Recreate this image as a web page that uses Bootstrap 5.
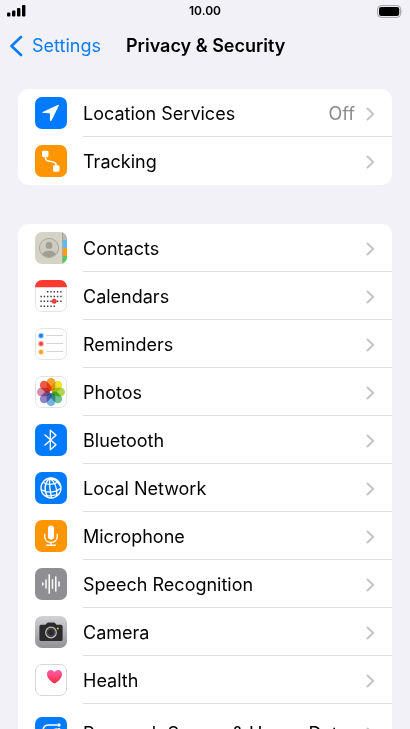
<!DOCTYPE html>
<html lang="en">
<head>
<meta charset="utf-8">
<meta name="viewport" content="width=device-width, initial-scale=1">
<title>Privacy &amp; Security</title>
<link href="https://cdn.jsdelivr.net/npm/bootstrap@5.3.0/dist/css/bootstrap.min.css" rel="stylesheet">
<style>
  body { background: #f2f1f7; color: #000; font-family: Inter, "Liberation Sans", sans-serif; font-size: 18px; line-height: 24px; }
  svg { display: block; flex: none; }
  .status-bar { height: 22px; padding: 0 7px; font-size: 12px; line-height: 22px; }
  .title-bar { height: 48px; padding: 0 8px; }
  .back-link { color: #0a7cf5; gap: 8px; width: 118px; }
  .page-title { font-size: 18px; line-height: 24px; }
  .settings-scroll { padding: 19px 18px 0; scrollbar-width: none; }
  .settings-scroll::-webkit-scrollbar { display: none; }
  .settings-group { border-radius: 11px; margin-bottom: 39px; }
  .setting { color: #000; padding-left: 17px; gap: 16px; }
  .setting-body { min-height: 48px; padding: 2px 17px 0 0; border-bottom: 1px solid #dfdfe2; gap: 11px; }
  .setting:last-child .setting-body { border-bottom: 0; }
  .setting-tall .setting-body { min-height: 58px; }
  .setting-value { color: #8a8a8e; }
  .petals { isolation: isolate; }
  .petals rect { mix-blend-mode: multiply; }
</style>
<script src="https://cdn.jsdelivr.net/npm/bootstrap@5.3.0/dist/js/bootstrap.bundle.min.js" defer></script>
</head>
<body class="vh-100 d-flex flex-column overflow-hidden">
<svg width="0" height="0" class="position-absolute" aria-hidden="true">
  <defs>
    <symbol id="chevron" viewBox="0 0 9 14"><path d="M1.5 1.5 7.2 7l-5.7 5.5" fill="none" stroke="#c4c4c7" stroke-width="2" stroke-linecap="round" stroke-linejoin="round"/></symbol>
    <linearGradient id="camera-bg" x2="0" y2="1"><stop stop-color="#d2d2d6"/><stop offset="1" stop-color="#929296"/></linearGradient>
    <linearGradient id="heart-fill" x2="0" y2="1"><stop stop-color="#ff5fae"/><stop offset="1" stop-color="#fb2b3c"/></linearGradient>
    <clipPath id="tile"><rect width="32" height="32" rx="7"/></clipPath>
  </defs>
</svg>

<div class="status-bar d-flex align-items-center flex-shrink-0">
  <div class="col">
    <svg width="19" height="12" viewBox="0 0 19 12" aria-label="Signal"><rect y="7.5" width="3.4" height="4" rx="1"/><rect x="5" y="5.5" width="3.4" height="6" rx="1"/><rect x="10" y="3" width="3.4" height="8.500" rx="1"/><rect x="15" width="3.400" height="11.500" rx="1"/></svg>
  </div>
  <div class="fw-semibold">10.00</div>
  <div class="col d-flex justify-content-end">
    <svg width="26" height="13" viewBox="0 0 26 13" aria-label="Battery"><rect x=".6" y=".6" width="23" height="11.800" rx="3.500" fill="none" stroke="#a3a3a8"/><rect x="2" y="2" width="20.200" height="9" rx="2.200"/><path d="M24.700 4.600q1.200 1.900 0 3.800z" fill="#a3a3a8"/></svg>
  </div>
</div>

<header class="title-bar d-flex align-items-center flex-shrink-0">
  <a href="#" class="back-link d-flex align-items-center text-decoration-none">
    <svg width="16" height="22" viewBox="0 0 16 22" aria-hidden="true"><path d="M13 2 3.500 11 13 20" fill="none" stroke="#0a7cf5" stroke-width="2.600" stroke-linecap="round" stroke-linejoin="round"/></svg>
    Settings
  </a>
  <h1 class="page-title fw-semibold mb-0">Privacy &amp; Security</h1>
</header>

<main class="settings-scroll flex-grow-1 overflow-auto">
  <nav class="settings-group bg-white overflow-hidden" aria-label="Tracking settings">
    <a href="#" class="setting d-flex align-items-center text-decoration-none">
      <svg width="32" height="32" viewBox="0 0 32 32" aria-hidden="true"><rect width="32" height="32" rx="7" fill="#007aff"/><path d="M23.200 7.800 7.700 14.900q-1 .8.300 1.200l6.800.2.200 7q.5 1.600 1.500.2l7.300-14.800q.3-1.100-.6-.9z" fill="#fff"/></svg>
      <span class="setting-body flex-grow-1 d-flex align-items-center"><span class="flex-grow-1">Location Services</span><span class="setting-value">Off</span><svg width="9" height="14"><use href="#chevron"/></svg></span>
    </a>
    <a href="#" class="setting d-flex align-items-center text-decoration-none">
      <svg width="32" height="32" viewBox="0 0 32 32" aria-hidden="true"><rect width="32" height="32" rx="7" fill="#ff9500"/><rect x="7" y="5.700" width="6.500" height="6.500" rx="1.400" fill="#fff"/><rect x="18" y="20.200" width="6.500" height="6.500" rx="1.400" fill="#fff"/><path d="M10.300 12c0 4.500 3 4 6 4.600 3.500.6 5 1.600 5 4" fill="none" stroke="#fff" stroke-width="1.500"/></svg>
      <span class="setting-body flex-grow-1 d-flex align-items-center"><span class="flex-grow-1">Tracking</span><svg width="9" height="14"><use href="#chevron"/></svg></span>
    </a>
  </nav>

  <nav class="settings-group bg-white overflow-hidden" aria-label="App permissions">
    <a href="#" class="setting d-flex align-items-center text-decoration-none">
      <svg width="32" height="32" viewBox="0 0 32 32" aria-hidden="true"><g clip-path="url(#tile)"><path fill="#d5d2c6" d="M0 0h32v32H0z"/><path fill="#b9b8b0" d="M27 0h5v8h-5z"/><path fill="#5ebdf0" d="M28 8h4v8h-4z"/><path fill="#ff9d16" d="M28 16h4v8h-4z"/><path fill="#4cce5b" d="M28 24h4v8h-4z"/><path fill="#aaa9a0" d="M27 0h1v32h-1z"/></g><circle cx="14" cy="16" r="9.600" fill="#cecbc0" stroke="#aaa79d"/><circle cx="14" cy="13.400" r="3.400" fill="#a19e94"/><path d="M7.200 22c2-4.300 11.600-4.300 13.600 0-3.500 4-10.100 4-13.600 0z" fill="#a19e94"/></svg>
      <span class="setting-body flex-grow-1 d-flex align-items-center"><span class="flex-grow-1">Contacts</span><svg width="9" height="14"><use href="#chevron"/></svg></span>
    </a>
    <a href="#" class="setting d-flex align-items-center text-decoration-none">
      <svg width="32" height="32" viewBox="0 0 32 32" aria-hidden="true"><rect x=".5" y=".5" width="31" height="31" rx="6.500" fill="#fff" stroke="#e4e4e6"/><path d="M0 7.200h32V7a7 7 0 0 0-7-7H7a7 7 0 0 0-7 7z" fill="#fb3b30"/><g fill="none" stroke="#38383a" stroke-width="1.400" stroke-dasharray="1.400 1.900"><path d="M12 11.800h14.600M5.400 16.500h21.200M5.400 21.300h21.200M5.400 26.200H20"/></g><circle cx="19.200" cy="21.300" r="2.500" fill="#fb3b30"/></svg>
      <span class="setting-body flex-grow-1 d-flex align-items-center"><span class="flex-grow-1">Calendars</span><svg width="9" height="14"><use href="#chevron"/></svg></span>
    </a>
    <a href="#" class="setting d-flex align-items-center text-decoration-none">
      <svg width="32" height="32" viewBox="0 0 32 32" aria-hidden="true"><rect x=".5" y=".5" width="31" height="31" rx="6.500" fill="#fff" stroke="#e4e4e6"/><path d="M11.500 7.500H28M11.500 15.500H28M11.500 23.500H28" stroke="#d4d4d8"/><circle cx="6" cy="7.700" r="3" fill="#a8d0ff"/><circle cx="6" cy="7.700" r="2" fill="#1681f5"/><circle cx="6" cy="15.800" r="3" fill="#ffb7b3"/><circle cx="6" cy="15.800" r="2" fill="#ef4641"/><circle cx="6" cy="24" r="3" fill="#ffdca4"/><circle cx="6" cy="24" r="2" fill="#f6a02b"/></svg>
      <span class="setting-body flex-grow-1 d-flex align-items-center"><span class="flex-grow-1">Reminders</span><svg width="9" height="14"><use href="#chevron"/></svg></span>
    </a>
    <a href="#" class="setting d-flex align-items-center text-decoration-none">
      <svg width="32" height="32" viewBox="0 0 32 32" aria-hidden="true"><rect x=".5" y=".5" width="31" height="31" rx="6.500" fill="#fff" stroke="#e4e4e6"/><g class="petals">
        <rect x="11.700" y="2" width="8.600" height="13" rx="4.300" fill="#f9a02c"/>
        <rect x="11.700" y="2" width="8.600" height="13" rx="4.300" fill="#ece32c" transform="rotate(45 16 16)"/>
        <rect x="11.700" y="2" width="8.600" height="13" rx="4.300" fill="#b3d64c" transform="rotate(90 16 16)"/>
        <rect x="11.700" y="2" width="8.600" height="13" rx="4.300" fill="#6cc391" transform="rotate(135 16 16)"/>
        <rect x="11.700" y="2" width="8.600" height="13" rx="4.300" fill="#74b2e4" transform="rotate(180 16 16)"/>
        <rect x="11.700" y="2" width="8.600" height="13" rx="4.300" fill="#9384c4" transform="rotate(225 16 16)"/>
        <rect x="11.700" y="2" width="8.600" height="13" rx="4.300" fill="#d48bb0" transform="rotate(270 16 16)"/>
        <rect x="11.700" y="2" width="8.600" height="13" rx="4.300" fill="#ef5a45" transform="rotate(315 16 16)"/></g></svg>
      <span class="setting-body flex-grow-1 d-flex align-items-center"><span class="flex-grow-1">Photos</span><svg width="9" height="14"><use href="#chevron"/></svg></span>
    </a>
    <a href="#" class="setting d-flex align-items-center text-decoration-none">
      <svg width="32" height="32" viewBox="0 0 32 32" aria-hidden="true"><rect width="32" height="32" rx="7" fill="#007aff"/><path d="M10 11l11 9.800-5.700 5V6.200l5.700 5L10 21" fill="none" stroke="#fff" stroke-width="1.400" stroke-linejoin="round" stroke-linecap="round"/></svg>
      <span class="setting-body flex-grow-1 d-flex align-items-center"><span class="flex-grow-1">Bluetooth</span><svg width="9" height="14"><use href="#chevron"/></svg></span>
    </a>
    <a href="#" class="setting d-flex align-items-center text-decoration-none">
      <svg width="32" height="32" viewBox="0 0 32 32" aria-hidden="true"><rect width="32" height="32" rx="7" fill="#007aff"/><g fill="none" stroke="#fff" stroke-width="1.300"><circle cx="16" cy="16" r="10"/><path d="M14.500 6C9 12 9 19 13 25.600M14.500 6c5.500 4 8 11 7 18.200M14.800 6.200c-.6 6 .2 13 1.900 19.800M15 6c5 1.200 9 5 10.800 9M8 10.500c5 2.500 11 2.500 15.500-1M6.300 17.800c7 3.400 14 2.700 19.300-1.500M9.500 23.300c4.700 1 9 .5 13.500-1.300"/></g></svg>
      <span class="setting-body flex-grow-1 d-flex align-items-center"><span class="flex-grow-1">Local Network</span><svg width="9" height="14"><use href="#chevron"/></svg></span>
    </a>
    <a href="#" class="setting d-flex align-items-center text-decoration-none">
      <svg width="32" height="32" viewBox="0 0 32 32" aria-hidden="true"><rect width="32" height="32" rx="7" fill="#ff9500"/><rect x="13" y="5.500" width="6" height="14" rx="3" fill="#fff"/><path d="M9.700 14.500v2c0 8 12.600 8 12.600 0v-2M16 22.500v2.500M11.700 25.300h8.600" fill="none" stroke="#fff" stroke-width="1.400" stroke-linecap="round"/></svg>
      <span class="setting-body flex-grow-1 d-flex align-items-center"><span class="flex-grow-1">Microphone</span><svg width="9" height="14"><use href="#chevron"/></svg></span>
    </a>
    <a href="#" class="setting d-flex align-items-center text-decoration-none">
      <svg width="32" height="32" viewBox="0 0 32 32" aria-hidden="true"><rect width="32" height="32" rx="7" fill="#8e8e93"/><path d="M7.800 15v2M11 12v8M14.200 6.800v18.400M17.500 11.800v8.400M20.800 9v14M24 14v4" stroke="#fff" stroke-width="1.500" stroke-linecap="round"/></svg>
      <span class="setting-body flex-grow-1 d-flex align-items-center"><span class="flex-grow-1">Speech Recognition</span><svg width="9" height="14"><use href="#chevron"/></svg></span>
    </a>
    <a href="#" class="setting d-flex align-items-center text-decoration-none">
      <svg width="32" height="32" viewBox="0 0 32 32" aria-hidden="true"><rect width="32" height="32" rx="7" fill="url(#camera-bg)"/><path d="M6 8.800h4.500L12 7q.4-.5 1.200-.5h5.600q.8 0 1.200.5l1.500 1.800H26q1.600 0 1.600 1.600v13q0 1.600-1.600 1.600H6q-1.600 0-1.600-1.600v-13Q4.400 8.800 6 8.800z" fill="#2b2b2d"/><circle cx="16" cy="16.500" r="5.300" fill="#2b2b2d" stroke="#c3c3c7" stroke-width="1.200"/><circle cx="16" cy="16.500" r="3.700" fill="none" stroke="#55555a" stroke-width=".8"/><circle cx="22.800" cy="12.600" r="1" fill="#fcc20a"/></svg>
      <span class="setting-body flex-grow-1 d-flex align-items-center"><span class="flex-grow-1">Camera</span><svg width="9" height="14"><use href="#chevron"/></svg></span>
    </a>
    <a href="#" class="setting d-flex align-items-center text-decoration-none">
      <svg width="32" height="32" viewBox="0 0 32 32" aria-hidden="true"><rect x=".5" y=".5" width="31" height="31" rx="6.500" fill="#fff" stroke="#d7d7da"/><path d="M19.500 19.600C15 17 12 13.700 12 10.200c0-4.600 5.300-5.800 7.500-2.200 2.200-3.600 7.500-2.400 7.500 2.200 0 3.500-3 6.800-7.500 9.400z" fill="url(#heart-fill)"/></svg>
      <span class="setting-body flex-grow-1 d-flex align-items-center"><span class="flex-grow-1">Health</span><svg width="9" height="14"><use href="#chevron"/></svg></span>
    </a>
    <a href="#" class="setting setting-tall d-flex align-items-center text-decoration-none">
      <svg width="32" height="32" viewBox="0 0 32 32" aria-hidden="true"><rect width="32" height="32" rx="7" fill="#007aff"/><g fill="none" stroke="#fff" stroke-width="1.500"><path d="M22.500 8H14q-6 0-6 6v6q0 4 4 4h8q4 0 4-4v-6M22.500 12c-5 0-8 3-10 7"/></g><circle cx="24" cy="8" r="1.700" fill="#fff"/><circle cx="24" cy="12.500" r="1.500" fill="#fff"/></svg>
      <span class="setting-body flex-grow-1 d-flex align-items-center"><span class="flex-grow-1">Research Sensor &amp; Usage Data</span><svg width="9" height="14"><use href="#chevron"/></svg></span>
    </a>
  </nav>
</main>
</body>
</html>
